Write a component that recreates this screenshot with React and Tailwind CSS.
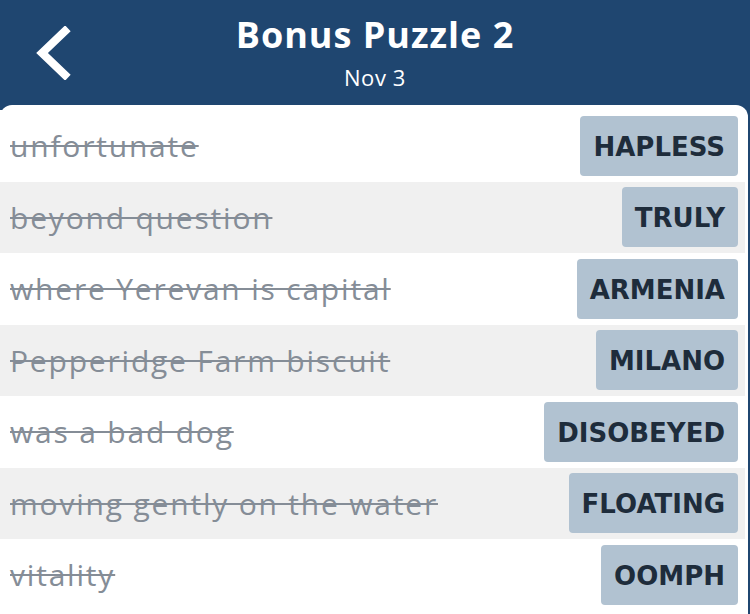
import React from "react";

const clues = [
    { clue: "unfortunate", answer: "HAPLESS" },
    { clue: "beyond question", answer: "TRULY" },
    { clue: "where Yerevan is capital", answer: "ARMENIA" },
    { clue: "Pepperidge Farm biscuit", answer: "MILANO" },
    { clue: "was a bad dog", answer: "DISOBEYED" },
    { clue: "moving gently on the water", answer: "FLOATING" },
    { clue: "vitality", answer: "OOMPH" },
];

const App = () => {
    return (
        <div className="w-[750px] h-[614px] overflow-hidden bg-[#1f4670] font-['Open_Sans',sans-serif]">
            {/* header */}
            <div className="relative h-[105px] flex flex-col items-center text-white">
                <button className="absolute left-[34px] top-[26px] w-[40px] h-[54px]">
                    <svg width="40" height="54" viewBox="0 0 40 54">
                        <path d="M31 5 L8 27 L31 49" fill="none" stroke="white" strokeWidth="8" strokeLinecap="square" />
                    </svg>
                </button>
                <h1 className="mt-[12px] text-[36px] leading-[46px] font-bold tracking-[1px]">Bonus Puzzle 2</h1>
                <p className="mt-[6px] text-[22px] leading-[26px] tracking-[0.6px]">Nov 3</p>
            </div>

            {/* list */}
            <div className="bg-white rounded-t-[12px] mr-[2px] pt-[5px] h-[509px]">
                {clues.map((item, i) => (
                    <div
                        key={i}
                        className={`h-[71.5px] mr-[3px] pr-[7px] pl-[10px] flex items-center justify-between ${i % 2 === 1 ? "bg-[#f0f0f0]" : "bg-white"}`}
                    >
                        <span className="text-[30px] text-[#858d97] line-through decoration-[2px] tracking-[1.8px]">
                            {item.clue}
                        </span>
                        <span className="h-[60px] flex items-center px-[13px] pt-[3px] rounded-[4px] bg-[#b1c2d1] font-['DejaVu_Sans',sans-serif] text-[26px] font-bold text-[#1e2c3b]">
                            {item.answer}
                        </span>
                    </div>
                ))}
            </div>
        </div>
    );
};

export default App;
